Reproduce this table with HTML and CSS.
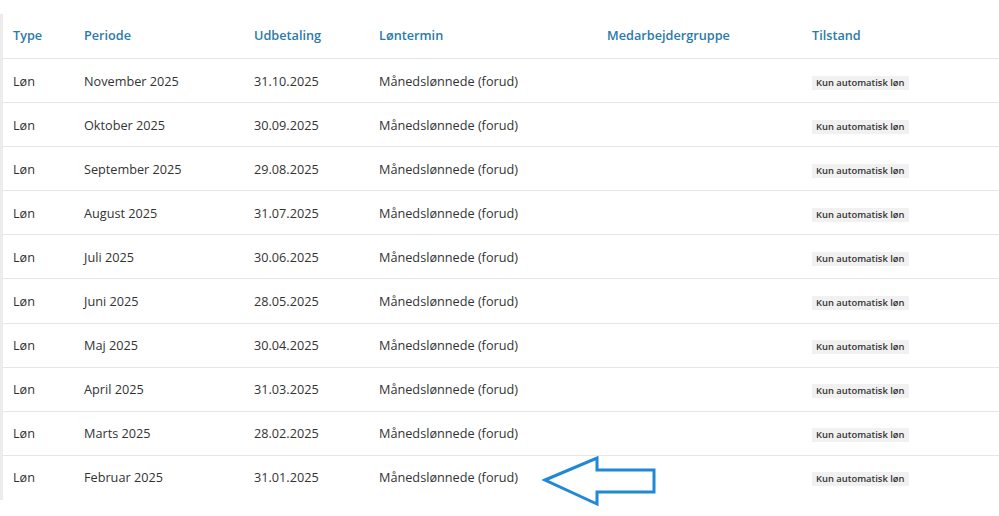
FILE: index.html
```html
<!DOCTYPE html>
<html lang="da">
<head>
<meta charset="utf-8">
<link rel="stylesheet" href="styles.css">
</head>
<body>
<div class="page">
  <div class="table">
    <div class="row head">
      <div class="c c1">Type</div>
      <div class="c c2">Periode</div>
      <div class="c c3">Udbetaling</div>
      <div class="c c4">Løntermin</div>
      <div class="c c5">Medarbejdergruppe</div>
      <div class="c c6">Tilstand</div>
    </div>
    <div class="row"><div class="c">Løn</div><div class="c">November 2025</div><div class="c">31.10.2025</div><div class="c">Månedslønnede (forud)</div><div class="c"></div><div class="c"><span class="badge">Kun automatisk løn</span></div></div>
    <div class="row"><div class="c">Løn</div><div class="c">Oktober 2025</div><div class="c">30.09.2025</div><div class="c">Månedslønnede (forud)</div><div class="c"></div><div class="c"><span class="badge">Kun automatisk løn</span></div></div>
    <div class="row"><div class="c">Løn</div><div class="c">September 2025</div><div class="c">29.08.2025</div><div class="c">Månedslønnede (forud)</div><div class="c"></div><div class="c"><span class="badge">Kun automatisk løn</span></div></div>
    <div class="row"><div class="c">Løn</div><div class="c">August 2025</div><div class="c">31.07.2025</div><div class="c">Månedslønnede (forud)</div><div class="c"></div><div class="c"><span class="badge">Kun automatisk løn</span></div></div>
    <div class="row"><div class="c">Løn</div><div class="c">Juli 2025</div><div class="c">30.06.2025</div><div class="c">Månedslønnede (forud)</div><div class="c"></div><div class="c"><span class="badge">Kun automatisk løn</span></div></div>
    <div class="row"><div class="c">Løn</div><div class="c">Juni 2025</div><div class="c">28.05.2025</div><div class="c">Månedslønnede (forud)</div><div class="c"></div><div class="c"><span class="badge">Kun automatisk løn</span></div></div>
    <div class="row"><div class="c">Løn</div><div class="c">Maj 2025</div><div class="c">30.04.2025</div><div class="c">Månedslønnede (forud)</div><div class="c"></div><div class="c"><span class="badge">Kun automatisk løn</span></div></div>
    <div class="row"><div class="c">Løn</div><div class="c">April 2025</div><div class="c">31.03.2025</div><div class="c">Månedslønnede (forud)</div><div class="c"></div><div class="c"><span class="badge">Kun automatisk løn</span></div></div>
    <div class="row"><div class="c">Løn</div><div class="c">Marts 2025</div><div class="c">28.02.2025</div><div class="c">Månedslønnede (forud)</div><div class="c"></div><div class="c"><span class="badge">Kun automatisk løn</span></div></div>
    <div class="row last"><div class="c">Løn</div><div class="c">Februar 2025</div><div class="c">31.01.2025</div><div class="c">Månedslønnede (forud)</div><div class="c"></div><div class="c"><span class="badge">Kun automatisk løn</span></div></div>
  </div>
  <svg class="arrow" width="120" height="56" viewBox="0 0 120 56" aria-hidden="true">
    <polygon points="4,24 56,2 56,14 113,14 113,36 56,36 56,48" fill="none" stroke="#2088d6" stroke-width="3" stroke-linejoin="miter"/>
  </svg>
</div>
</body>
</html>
```
FILE: styles.css
```css
html, body {
  margin: 0;
  padding: 0;
  background: #fff;
}
body {
  font-family: "Open Sans", "Liberation Sans", sans-serif;
  font-size: 12.7px;
  color: #333;
}
.page {
  position: relative;
  padding-top: 14px;
  height: 502px;
}
.table {
  border-left: 3px solid #ececec;
  height: 486px;
}
.row {
  display: grid;
  grid-template-columns: 71px 170px 125px 228px 205px 1fr;
  align-items: center;
  height: 43.1px;
  padding-left: 10px;
  border-bottom: 1px solid #e6e6e6;
}
.row.head {
  box-sizing: border-box;
  height: 45px;
  padding-bottom: 3px;
}
.row.last {
  border-bottom: none;
}
.head .c {
  color: #2b7aa9;
  font-weight: 600;
}
.c {
  white-space: nowrap;
}
.badge {
  display: inline-block;
  background: #f1f1f1;
  font-size: 9.4px;
  font-weight: 600;
  color: #333;
  padding: 0 4px;
  line-height: 14px;
}
.arrow {
  position: absolute;
  left: 541px;
  top: 456px;
}
```
